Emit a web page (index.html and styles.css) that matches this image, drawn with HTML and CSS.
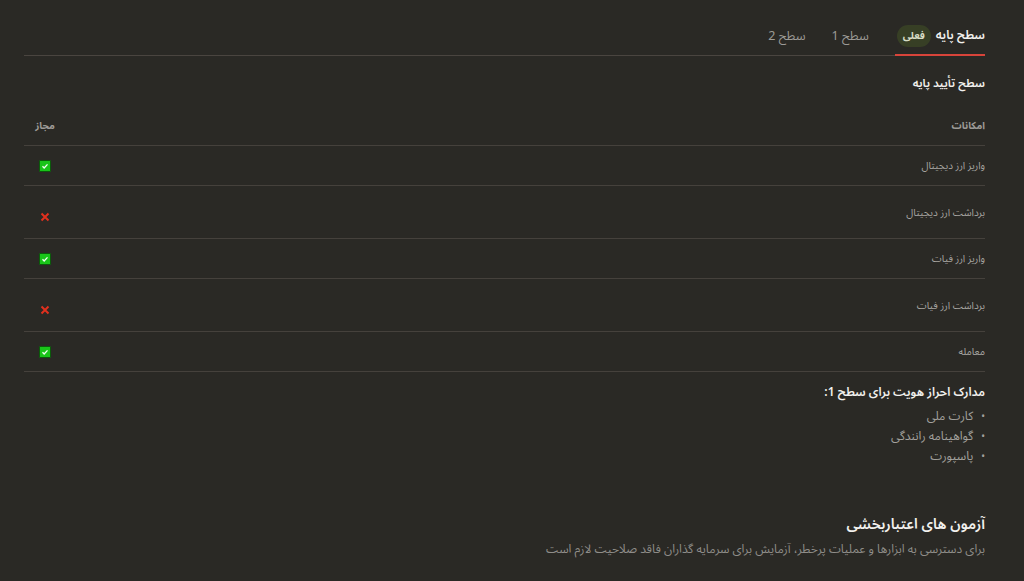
FILE: index.html
```html
<!DOCTYPE html>
<html lang="fa" dir="rtl">
<head>
<meta charset="UTF-8">
<title>سطوح احراز هویت</title>
<link rel="stylesheet" href="styles.css">
</head>
<body>
	<div class="page">

		<!-- تب های سطح -->
		<div class="tabs">
			<div class="tab active">سطح پایه <span class="badge">فعلی</span></div>
			<div class="tab">سطح 1</div>
			<div class="tab">سطح 2</div>
		</div>

		<h3 class="level-title">سطح تأیید پایه</h3>

		<!-- جدول امکانات -->
		<table class="features">
			<thead>
				<tr><th>امکانات</th><th class="allowed">مجاز</th></tr>
			</thead>
			<tbody>
				<tr><td>واریز ارز دیجیتال</td><td class="allowed"><span class="ok"><svg viewBox="0 0 12 12"><path d="M3 6.3l2 2 4-4.3"/></svg></span></td></tr>
				<tr class="tall"><td>برداشت ارز دیجیتال</td><td class="allowed"><span class="no"><svg viewBox="0 0 12 12"><path d="M2.5 2.5l7 7M9.5 2.5l-7 7"/></svg></span></td></tr>
				<tr><td>واریز ارز فیات</td><td class="allowed"><span class="ok"><svg viewBox="0 0 12 12"><path d="M3 6.3l2 2 4-4.3"/></svg></span></td></tr>
				<tr class="tall"><td>برداشت ارز فیات</td><td class="allowed"><span class="no"><svg viewBox="0 0 12 12"><path d="M2.5 2.5l7 7M9.5 2.5l-7 7"/></svg></span></td></tr>
				<tr><td>معامله</td><td class="allowed"><span class="ok"><svg viewBox="0 0 12 12"><path d="M3 6.3l2 2 4-4.3"/></svg></span></td></tr>
			</tbody>
		</table>

		<!-- مدارک مورد نیاز -->
		<div class="docs">
			<h4>مدارک احراز هویت برای سطح 1:</h4>
			<ul>
				<li>کارت ملی</li>
				<li>گواهینامه رانندگی</li>
				<li>پاسپورت</li>
			</ul>
		</div>

		<div class="exams">
			<h3>آزمون های اعتباربخشی</h3>
			<p>برای دسترسی به ابزارها و عملیات پرخطر، آزمایش برای سرمایه گذاران فاقد صلاحیت لازم است</p>
		</div>

	</div>
</body>
</html>
```

FILE: styles.css
```css
body {
  margin: 0;
  background-color: #2a2925;
  color: #a3a19d;
  font-family: "Noto Sans Arabic", "Noto Sans", sans-serif;
}

.page {
  padding: 0 39px 0 24px;
}

/* تب ها */
.tabs {
  display: flex;
  gap: 26px;
  border-bottom: 1px solid #4a4540;
  padding-top: 21px;
}

.tab {
  display: flex;
  align-items: center;
  gap: 5px;
  font-size: 12.5px;
  color: #9c9a96;
  height: 29px;
  padding-bottom: 5px;
  margin-bottom: -1px;
}

.tab.active {
  color: #f2f1ee;
  font-size: 12px;
  font-weight: 600;
  border-bottom: 2px solid #d8443a;
  padding-bottom: 4px;
  padding-left: 2px;
}

.badge {
  background-color: #373f25;
  color: #d7dcc4;
  font-size: 10px;
  font-weight: bold;
  border-radius: 12px;
  padding: 3px 6px;
  line-height: 16px;
}

.level-title {
  margin: 17px 0 0;
  font-size: 11.5px;
  font-weight: 600;
  line-height: 20px;
  color: #f2f1ee;
}

/* جدول */
.features {
  width: 100%;
  border-collapse: collapse;
  margin-top: 25px;
  font-size: 10px;
  line-height: 15px;
}

.features th,
.features td {
  text-align: right;
  border-bottom: 1px solid #45413c;
  height: 39px;
  padding: 0;
  color: #a8a6a2;
  font-weight: normal;
  vertical-align: middle;
}

.features th {
  height: auto;
  vertical-align: bottom;
  padding-bottom: 12px;
  font-weight: bold;
  color: #9d9b97;
}

.features .allowed {
  width: 42px;
  text-align: center;
}

.features tr.tall td {
  height: 52px;
}

.features tr.tall td.allowed {
  height: auto;
  vertical-align: bottom;
  padding-bottom: 14px;
}

.ok,
.no {
  display: inline-block;
  width: 12px;
  height: 12px;
  vertical-align: middle;
}

.ok {
  background-color: #19c419;
  border: 1px solid #0b5a0b;
  box-sizing: border-box;
  border-radius: 1px;
}

.ok svg,
.no svg {
  display: block;
  width: 100%;
  height: 100%;
  fill: none;
}

.ok svg path {
  stroke: #f2fff2;
  stroke-width: 1.6;
}

.no svg path {
  stroke: #e0301e;
  stroke-width: 2;
}

/* مدارک */
.docs h4 {
  margin: 12px 0 0;
  font-size: 12px;
  font-weight: 600;
  line-height: 18px;
  color: #f2f1ee;
}

.docs ul {
  list-style: none;
  margin: 5px 0 0;
  padding: 0;
  font-size: 12px;
  line-height: 20px;
}

.docs li {
  display: flex;
  gap: 8px;
}

.docs li::before {
  content: "•";
  font-size: 10px;
}

.exams {
  margin-top: 47px;
}

.exams h3 {
  margin: 0;
  font-size: 14.5px;
  font-weight: 600;
  line-height: 22px;
  color: #f2f1ee;
}

.exams p {
  margin: 5px 0 0;
  font-size: 12px;
  line-height: 18px;
  color: #8f8d89;
}
```
